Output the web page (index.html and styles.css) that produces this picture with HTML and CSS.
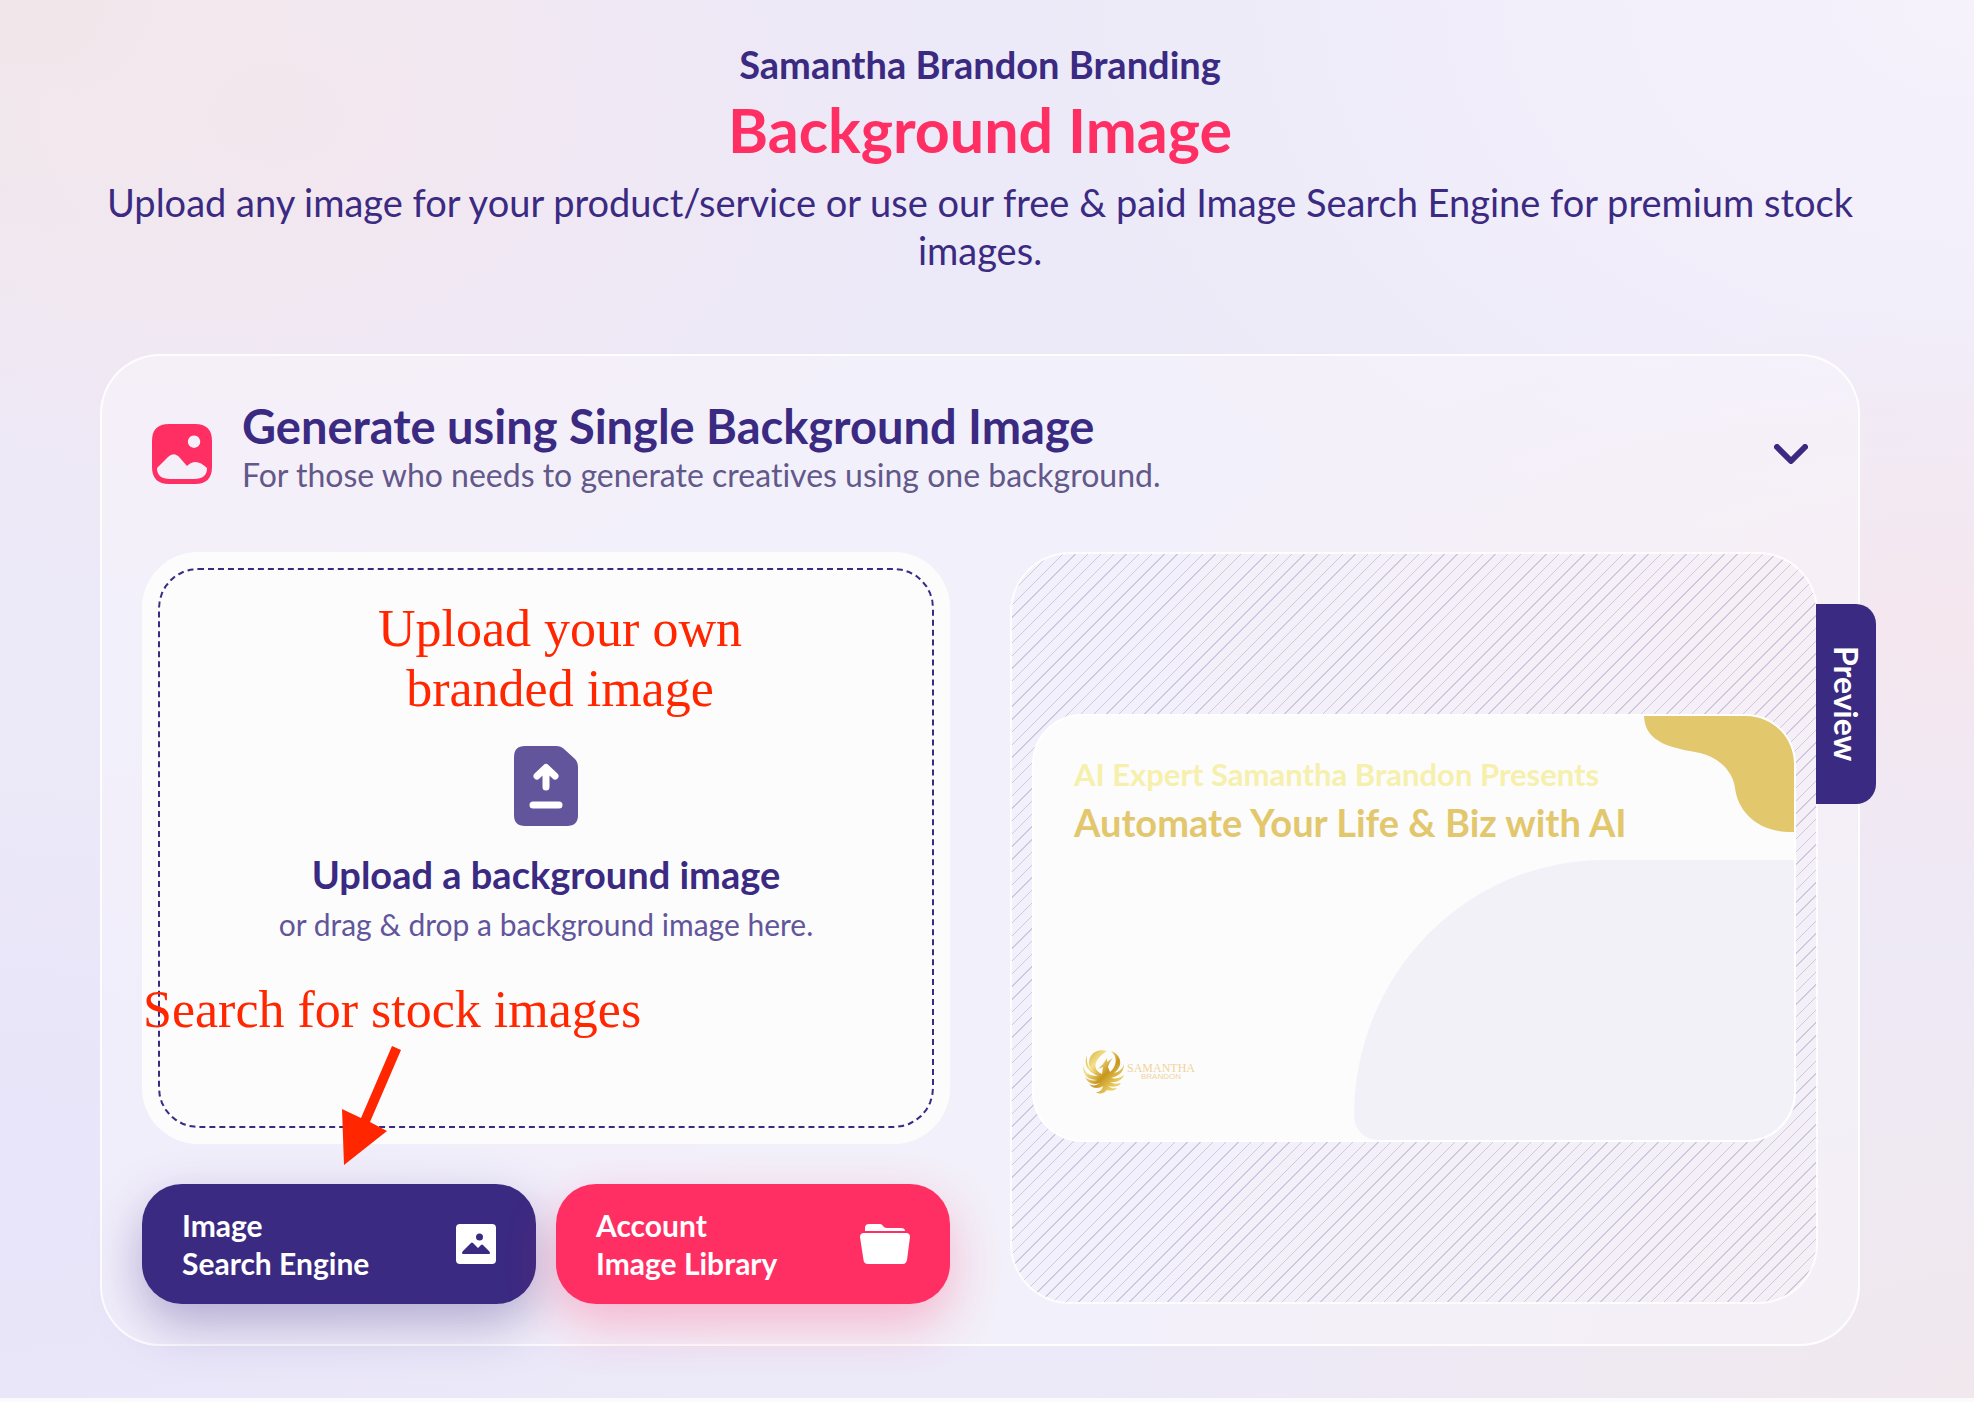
FILE: index.html
```
<!DOCTYPE html>
<html lang="en">
<head>
  <meta charset="UTF-8">
  <meta name="viewport" content="width=device-width, initial-scale=1.0">
  <title>Background Image</title>
  <link rel="stylesheet" href="styles.css">
</head>
<body>

<main class="page">
  <header class="page-header">
    <h2 class="brand-name">Samantha Brandon Branding</h2>
    <h1 class="page-title">Background Image</h1>
    <p class="page-text">Upload any image for your product/service or use our free &amp; paid Image Search Engine for premium stock images.</p>
  </header>

  <section class="panel">
    <div class="panel-header">
      <svg class="panel-icon" viewBox="0 0 60 60">
        <path fill="#ff2e63" fill-rule="evenodd" d="M17 0H43Q60 0 60 17V43Q60 60 43 60H17Q0 60 0 43V17Q0 0 17 0ZM42 11.500a6.200 6.200 0 1 0 .1 0ZM5 44L16 33Q22 27 28 34L35 42Q44 33 55 44Q55 55 42 55H18Q5 55 5 44Z"/>
      </svg>
      <div class="panel-titles">
        <h3>Generate using Single Background Image</h3>
        <p>For those who needs to generate creatives using one background.</p>
      </div>
      <button class="toggle" type="button" aria-label="Toggle section">
        <svg viewBox="0 0 34 20"><path d="M3 3L17 17L31 3" fill="none" stroke="#3b2a82" stroke-width="6" stroke-linecap="round" stroke-linejoin="round"/></svg>
      </button>
    </div>

    <div class="columns">
      <div class="left-column">
        <div class="upload-box">
          <button class="upload-area" type="button">
            <svg class="upload-icon" viewBox="0 0 64 80">
              <path fill="#62559b" d="M11 0H42Q47 0 50 3L61 13Q64 16 64 21V69Q64 80 53 80H11Q0 80 0 69V11Q0 0 11 0Z"/>
              <path d="M32 41V22M23 30L32 21.500L41 30" fill="none" stroke="#fff" stroke-width="7" stroke-linecap="round" stroke-linejoin="round"/>
              <path d="M19 59H45" stroke="#fff" stroke-width="7" stroke-linecap="round"/>
            </svg>
            <span class="upload-title">Upload a background image</span>
            <span class="upload-text">or drag &amp; drop a background image here.</span>
          </button>
          <p class="note note-upload">Upload your own<br>branded image</p>
          <p class="note note-search">Search for stock images</p>
          <svg class="note-arrow" viewBox="0 0 60 124">
            <path fill="#ff2600" d="M52 2L61 6L30 78L47 87L4 121L2 65L21 74Z"/>
          </svg>
        </div>

        <div class="actions">
          <button class="action action-search" type="button">
            <span>Image<br>Search Engine</span>
            <svg width="40" height="40" viewBox="0 0 40 40">
              <rect width="40" height="40" rx="4" fill="#fff"/>
              <circle cx="23.500" cy="13" r="3.500" fill="#3b2a82"/>
              <path fill="#3b2a82" d="M7 30Q5 29 7 27L15 19Q16 18 17 19L22 24L25 21Q26 20 27 21L33 27Q35 30 33 30Z"/>
            </svg>
          </button>
          <button class="action action-library" type="button">
            <span>Account<br>Image Library</span>
            <svg width="50" height="40" viewBox="0 0 50 40">
              <path fill="#fff" d="M5 7V4Q5 0 9 0H20Q22 0 23 2L24 3Q25 4 27 4H41Q45 4 45 7Z"/>
              <path fill="#fff" d="M4 9H46Q50 9 50 13L47 36Q46 40 43 40H8Q4 40 3.500 36L0 13Q0 9 4 9Z"/>
            </svg>
          </button>
        </div>
      </div>

      <div class="preview">
        <div class="card">
          <svg class="card-corner" viewBox="0 0 150 116">
            <path fill="#e2c76d" d="M0 0H150V116C114 117 94 96 91 72C89 55 74 41 56 37C30 32 1 28 0 0Z"/>
          </svg>
          <div class="card-blob"></div>
          <p class="card-tagline">AI Expert Samantha Brandon Presents</p>
          <p class="card-headline">Automate Your Life &amp; Biz with AI</p>
          <div class="card-logo">
            <svg width="42" height="44" viewBox="0 0 42 44">
              <defs>
                <linearGradient id="gold" x1="0" y1="0" x2="1" y2="1">
                  <stop offset="0" stop-color="#d0a52c"/>
                  <stop offset="0.300" stop-color="#f3e08a"/>
                  <stop offset="0.550" stop-color="#c7961d"/>
                  <stop offset="0.800" stop-color="#ecd067"/>
                  <stop offset="1" stop-color="#c59a25"/>
                </linearGradient>
              </defs>
              <path fill="url(#gold)" d="M4 5C0 17 6 22 15 26C5 26 1 22 0 15C0 25 4 30 15 30C9 31 5 30 2 27C5 34 11 35 17 33C13 36 9 36 6 34C11 40 17 38 20 36C19 40 17 42 13 42C17 45 22 43 24 40C27 41 31 41 34 38C30 39 28 38 25 36C31 38 36 36 38 33C34 34 30 34 27 32C34 33 39 30 41 25C37 28 33 29 28 28C37 26 41 21 41 14C40 19 36 22 31 23C42 15 37 4 28 1C35 7 34 16 27 22L25 17C26 14 27 11 30 8L24 12V8L20 14L15 19L20 17L19 24C10 20 9 11 24 1C12-2 5 6 6 15C7 19 9 21 13 23C6 20 3 14 4 5Z"/>
            </svg>
            <div class="logo-text">
              <span class="logo-first">SAMANTHA</span>
              <span class="logo-last">BRANDON</span>
            </div>
          </div>
        </div>
        <span class="preview-tab">Preview</span>
      </div>
    </div>
  </section>
</main>

<footer class="bottom-strip"></footer>

</body>
</html>
```
FILE: styles.css
```
* {
  box-sizing: border-box;
}

body {
  margin: 0;
  color: #3b2a82;
  font-family: Lato, "Open Sans", sans-serif;
  font-variant-ligatures: none;
  background-color: #fbfbfb;
}

h1, h2, h3, p {
  margin: 0;
}

button {
  border: 0;
  padding: 0;
  background: none;
  color: inherit;
  font: inherit;
  cursor: pointer;
}

.page {
  padding: 40px 114px 52px 100px;
  background:
    radial-gradient(ellipse at 0% 0%, #f1e7ea 0%, transparent 22%),
    radial-gradient(ellipse at 14% 8%, #f4e7f1 0%, transparent 28%),
    radial-gradient(ellipse at 0% 85%, #e8e4fa 0%, transparent 28%),
    radial-gradient(ellipse at 100% 45%, #f5e7ee 0%, transparent 30%),
    radial-gradient(ellipse at 100% 100%, #f0e8ed 0%, transparent 32%),
    radial-gradient(ellipse at 100% 0%, #f6f2fc 0%, transparent 35%),
    #ece9f8;
}

.page-header {
  text-align: center;
}

.brand-name {
  font-size: 38px;
  line-height: 48px;
}

.page-title {
  color: #ff2e63;
  font-size: 61px;
  line-height: 84px;
}

.page-text {
  margin-top: 6px;
  font-size: 38px;
  line-height: 48px;
}

.panel {
  margin-top: 80px;
  padding: 40px;
  border: 2px solid rgba(255, 255, 255, 0.85);
  border-radius: 60px;
  background: rgba(250, 248, 253, 0.45);
}

.panel-header {
  display: flex;
  align-items: center;
  gap: 30px;
  height: 116px;
  padding: 0 10px;
}

.panel-icon {
  width: 60px;
  height: 60px;
}

.panel-titles {
  flex: 1;
  padding-bottom: 12px;
}

.panel-titles h3 {
  font-size: 47px;
  line-height: 54px;
}

.panel-titles p {
  color: #62588a;
  font-size: 32px;
  line-height: 44px;
}

.toggle svg {
  display: block;
  width: 34px;
  height: 20px;
}

.columns {
  display: grid;
  grid-template-columns: 1fr 1fr;
  gap: 60px;
  margin-top: 40px;
}

.left-column {
  display: flex;
  flex-direction: column;
  gap: 40px;
}

.upload-box {
  position: relative;
  display: flex;
  min-height: 592px;
  padding: 16px;
  border-radius: 56px;
  background: #fcfcfd;
}

.upload-area {
  flex: 1;
  display: flex;
  flex-direction: column;
  align-items: center;
  justify-content: center;
  padding-bottom: 4px;
  border: 2px dashed #3b2a82;
  border-radius: 40px;
}

.upload-icon {
  width: 64px;
  height: 80px;
  margin-bottom: 20px;
}

.upload-title {
  font-size: 38px;
  font-weight: bold;
  line-height: 56px;
}

.upload-text {
  color: #62559b;
  font-size: 30px;
  line-height: 44px;
}

/* red notes drawn over the upload box */
.note {
  position: absolute;
  color: #ff2600;
  font-family: "Liberation Serif", "Times New Roman", serif;
  font-size: 52px;
  line-height: 60px;
  text-align: center;
  white-space: nowrap;
  pointer-events: none;
}

.note-upload {
  top: 47px;
  left: 236px;
}

.note-search {
  top: 428px;
  left: 1px;
}

.note-arrow {
  position: absolute;
  top: 492px;
  left: 198px;
  width: 60px;
  height: 124px;
  overflow: visible;
  pointer-events: none;
}

.actions {
  display: grid;
  grid-template-columns: 1fr 1fr;
  gap: 20px;
}

.action {
  display: flex;
  align-items: center;
  justify-content: space-between;
  height: 120px;
  padding: 0 40px;
  border-radius: 40px;
  color: #fff;
  font-size: 30px;
  font-weight: bold;
  line-height: 38px;
  text-align: left;
}

.action-search {
  background: #3b2a82;
  box-shadow: 0 20px 50px rgba(59, 42, 130, 0.35);
}

.action-library {
  background: #ff2e63;
  box-shadow: 0 20px 50px rgba(255, 46, 99, 0.3);
}

.preview {
  position: relative;
  display: flex;
  align-items: center;
  padding: 20px;
  border: 2px solid rgba(255, 255, 255, 0.85);
  border-radius: 60px;
  background: repeating-linear-gradient(-45deg, transparent 0 8px, rgba(59, 42, 130, 0.2) 8px 9px);
}

.card {
  position: relative;
  flex: 1;
  display: flex;
  flex-direction: column;
  height: 428px;
  padding: 34px 48px 46px 40px;
  border: 2px solid #fff;
  border-radius: 50px;
  background: #fcfcfd;
  overflow: hidden;
}

.card-corner {
  position: absolute;
  top: 0;
  right: 0;
  width: 150px;
  height: 116px;
}

.card-blob {
  position: absolute;
  right: 0;
  bottom: 0;
  width: 440px;
  height: 280px;
  border-radius: 250px 0 0 24px / 256px 0 0 24px;
  background: #f2f1f8;
}

.card-tagline {
  color: #f6f0ac;
  font-size: 31px;
  font-weight: bold;
  line-height: 48px;
}

.card-headline {
  color: #e2c76d;
  font-size: 38px;
  font-weight: bold;
  line-height: 48px;
}

.card-logo {
  display: flex;
  align-items: center;
  gap: 2px;
  margin-top: auto;
  padding-left: 9px;
}

.logo-text {
  display: flex;
  flex-direction: column;
  align-items: center;
  color: #f0d49a;
}

.logo-first {
  font-family: "Liberation Serif", serif;
  font-size: 12px;
  line-height: 10px;
}

.logo-last {
  font-family: "Liberation Sans", sans-serif;
  font-size: 8px;
  line-height: 8px;
}

.preview-tab {
  position: absolute;
  top: 50px;
  left: 100%;
  width: 60px;
  height: 200px;
  border-radius: 0 20px 20px 0;
  background: #3b2a82;
  color: #fff;
  font-size: 32px;
  font-weight: bold;
  line-height: 60px;
  text-align: center;
  writing-mode: vertical-rl;
}

.bottom-strip {
  min-height: 4px;
}
```
